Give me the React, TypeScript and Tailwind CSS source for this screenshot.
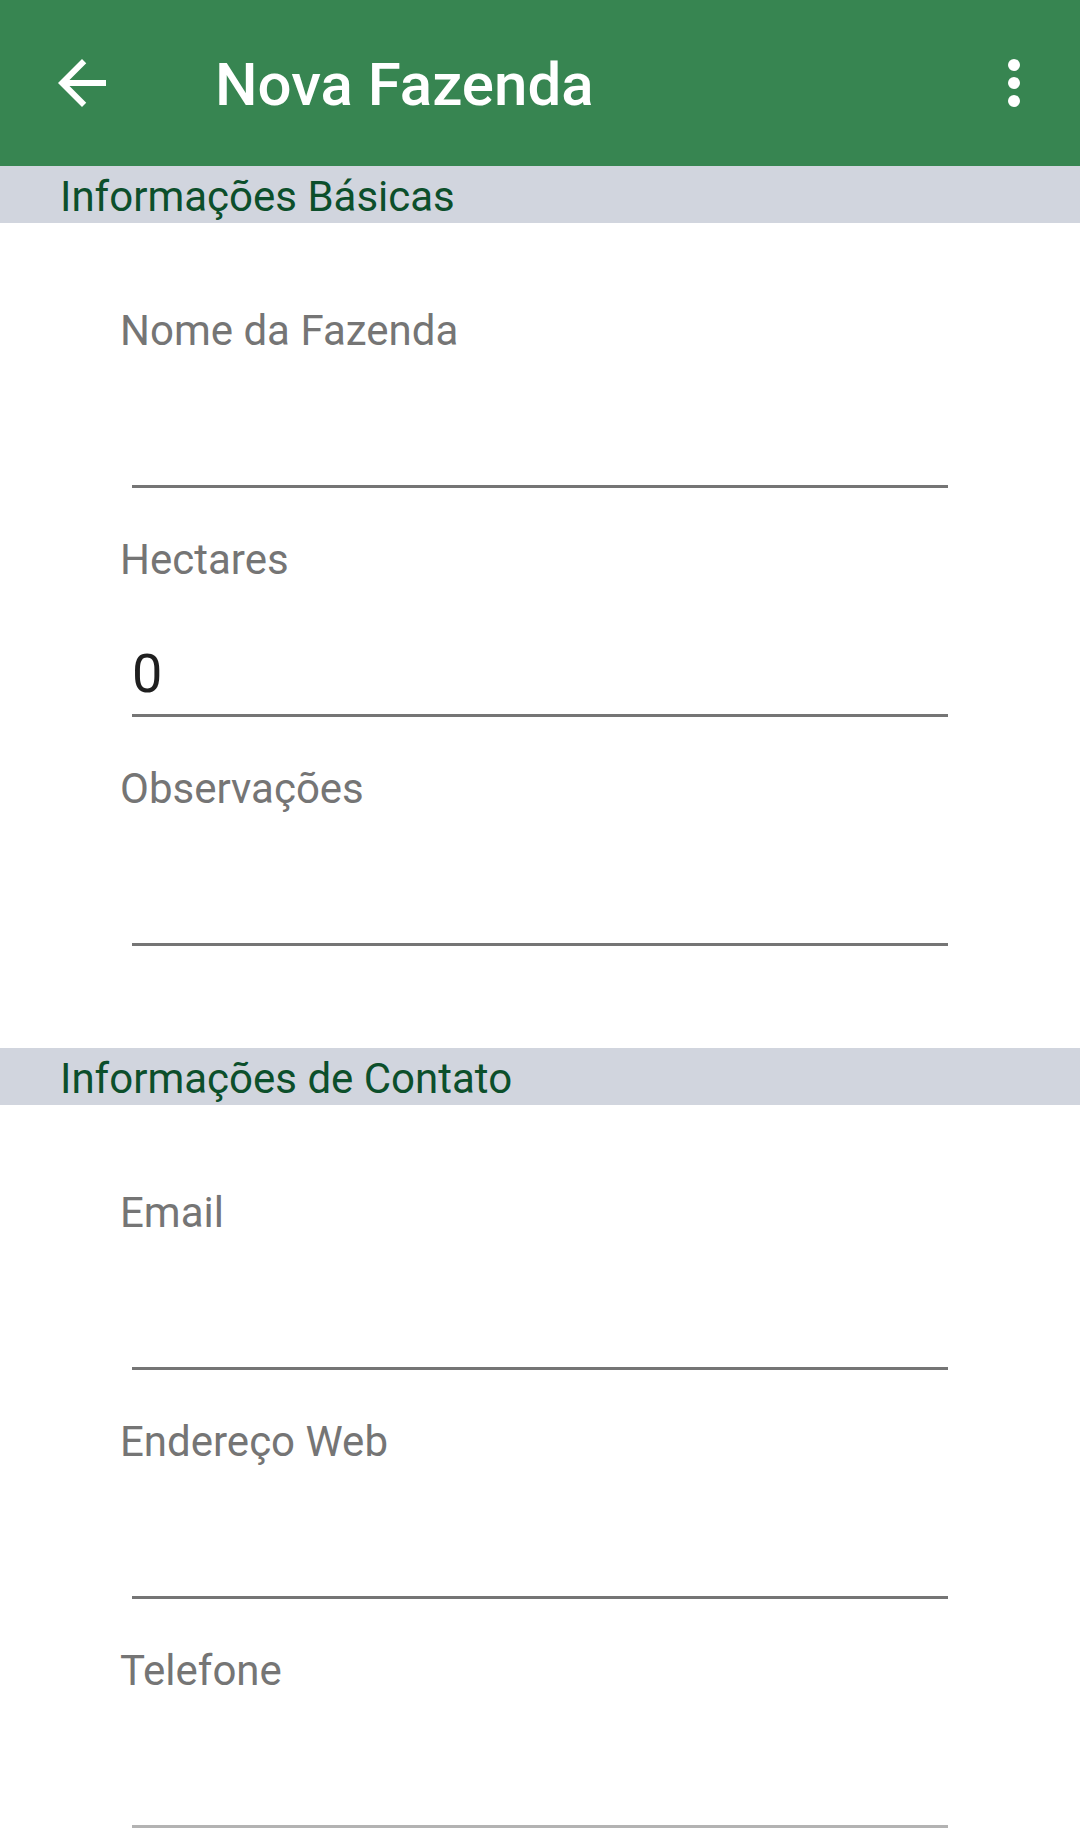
import React from "react";

function Field({ label, value, last }: { label: string; value?: string; last?: boolean }) {
  return (
    <div className="pt-[51px] pl-[120px] pr-[132px]">
      <div className="text-[42px] leading-[42px] text-[#757575]">{label}</div>
      <div
        className={`ml-[12px] h-[136px] border-b-[3px] flex items-end pb-[13px] ${
          last ? "border-[#b3b3b3]" : "border-[#757575]"
        }`}
      >
        {value !== undefined && (
          <span className="text-[54px] leading-[54px] text-[#1f1f1f]">{value}</span>
        )}
      </div>
    </div>
  );
}

function SectionHeader({ title }: { title: string }) {
  return (
    <div className="h-[57px] bg-[#d1d5de] pl-[60px] pt-[10px]">
      <div className="text-[42px] leading-[42px] text-[#0c4f2b]">{title}</div>
    </div>
  );
}

export default function App() {
  return (
    <div
      className="w-[1080px] h-[1846px] overflow-hidden bg-white"
      style={{ fontFamily: "Roboto, 'Noto Sans', sans-serif" }}
    >
      <div className="h-[166px] bg-[#378551] flex items-center">
        <div className="w-[72px] h-[72px] ml-[46px] flex items-center justify-center">
          <svg width="72" height="72" viewBox="0 0 24 24" fill="white">
            <path d="M20 11H7.83l5.59-5.59L12 4l-8 8 8 8 1.41-1.41L7.83 13H20v-2z" />
          </svg>
        </div>
        <div className="ml-[97px] mt-[3px] text-[60px] leading-[60px] font-medium text-white">
          Nova Fazenda
        </div>
        <div className="ml-auto mr-[30px] w-[72px] h-[72px] flex items-center justify-center">
          <svg width="72" height="72" viewBox="0 0 24 24" fill="white">
            <circle cx="12" cy="6" r="2" />
            <circle cx="12" cy="12" r="2" />
            <circle cx="12" cy="18" r="2" />
          </svg>
        </div>
      </div>
      <SectionHeader title="Informações Básicas" />
      <div className="pt-[36px] pb-[102px]">
        <Field label="Nome da Fazenda" />
        <Field label="Hectares" value="0" />
        <Field label="Observações" />
      </div>
      <SectionHeader title="Informações de Contato" />
      <div className="pt-[36px]">
        <Field label="Email" />
        <Field label="Endereço Web" />
        <Field label="Telefone" last />
      </div>
    </div>
  );
}
